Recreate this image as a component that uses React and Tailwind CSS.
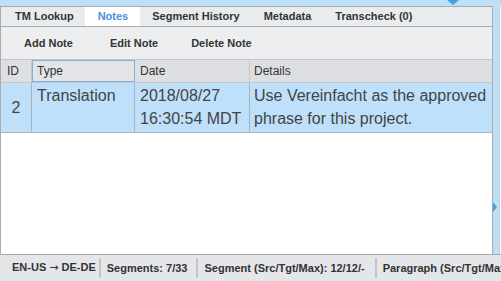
const TABS = ['TM Lookup', 'Notes', 'Segment History', 'Metadata', 'Transcheck (0)']

export default function App() {
  return (
    <div className="relative flex h-[281px] w-[501px] flex-col overflow-hidden bg-white font-['Liberation_Sans',Arial,sans-serif] text-[#333]">
      {/* top strip */}
      <div className="relative h-[6px] shrink-0 bg-[#bddff8]">
        <div className="absolute left-[447px] top-0 h-0 w-0 border-x-[6px] border-t-[5px] border-x-transparent border-t-[#4a9ee2]" />
      </div>

      <div className="flex min-h-0 flex-1">
        {/* panel */}
        <div className="flex w-[493px] flex-col border-x border-t border-[#a9abae]">
          {/* tabs */}
          <div className="flex h-[20px] shrink-0 items-center border-b border-[#a9abae] bg-[#e9ecef] text-[11px] font-bold">
            {TABS.map((t) => (
              <div
                key={t}
                className={
                  t === 'Notes'
                    ? 'flex h-full items-center bg-white pl-[13px] pr-[12px] text-[#4a90d9]'
                    : t === 'TM Lookup'
                      ? 'flex h-full items-center pl-[14px] pr-[11px]'
                      : 'flex h-full items-center px-[12px]'
                }
              >
                {t}
              </div>
            ))}
          </div>

          {/* toolbar */}
          <div className="flex h-[32px] shrink-0 items-center gap-[38px] bg-[#eceef0] pl-[23px] text-[11px] font-bold">
            <span>Add Note</span>
            <span className="-ml-[1px]">Edit Note</span>
            <span className="-ml-[5px]">Delete Note</span>
          </div>

          {/* table header */}
          <div className="flex h-[24px] shrink-0 border-y border-[#c4c6c9] bg-[#dedfe2] text-[12px]">
            <div className="flex w-[31px] items-center border-r border-[#c4c6c9] pl-[6px]">ID</div>
            <div className="flex w-[103px] items-center border border-[#7fb2df] bg-[#e2e4e7] pl-[4px]">Type</div>
            <div className="flex w-[115px] items-center border-r border-[#c4c6c9] pl-[5px]">Date</div>
            <div className="flex flex-1 items-center pl-[4px]">Details</div>
          </div>

          {/* data row */}
          <div className="flex h-[50px] shrink-0 border-b border-[#a9b4bd] bg-[#bee0fa] text-[16px] leading-[23px] text-[#444]">
            <div className="flex w-[31px] items-center justify-center border-r border-[#a9b4bd]">2</div>
            <div className="w-[103px] border-r border-[#a9b4bd] pl-[5px] pt-[1px]">Translation</div>
            <div className="w-[115px] border-r border-[#a9b4bd] pl-[5px] pt-[1px]">
              2018/08/27
              <br />
              16:30:54 MDT
            </div>
            <div className="flex-1 pl-[4px] pt-[1px]">
              Use Vereinfacht as the approved
              <br />
              phrase for this project.
            </div>
          </div>

          <div className="flex-1 bg-white" />
        </div>

        {/* right strip */}
        <div className="relative flex w-[8px] bg-[#bddff8]">
          <div className="absolute left-0 top-[196px] h-0 w-0 border-y-[5px] border-l-[4px] border-y-transparent border-l-[#4a9ee2]" />
          <div className="ml-auto w-[2px] border-l border-[#c8ccd0] bg-white" />
        </div>
      </div>

      {/* status bar */}
      <div className="flex h-[27px] shrink-0 items-center overflow-hidden whitespace-nowrap border-t border-[#a9abae] bg-[#e4e6e9] text-[11px] font-bold">
        <span className="shrink-0 pl-[12px] pr-[3px]">
          EN-US <span className="font-['DejaVu_Sans',sans-serif] font-normal">→</span> DE-DE
        </span>
        <span className="h-[20px] w-[2px] shrink-0 bg-[#c3c5c8]" />
        <span className="shrink-0 pl-[6px] pr-[9px]">Segments: 7/33</span>
        <span className="h-[20px] w-[2px] shrink-0 bg-[#c3c5c8]" />
        <span className="shrink-0 pl-[6px] pr-[10px]">Segment (Src/Tgt/Max): 12/12/-</span>
        <span className="h-[20px] w-[2px] shrink-0 bg-[#c3c5c8]" />
        <span className="shrink-0 pl-[6px]">Paragraph (Src/Tgt/Max): 12/12/-</span>
      </div>
    </div>
  )
}
